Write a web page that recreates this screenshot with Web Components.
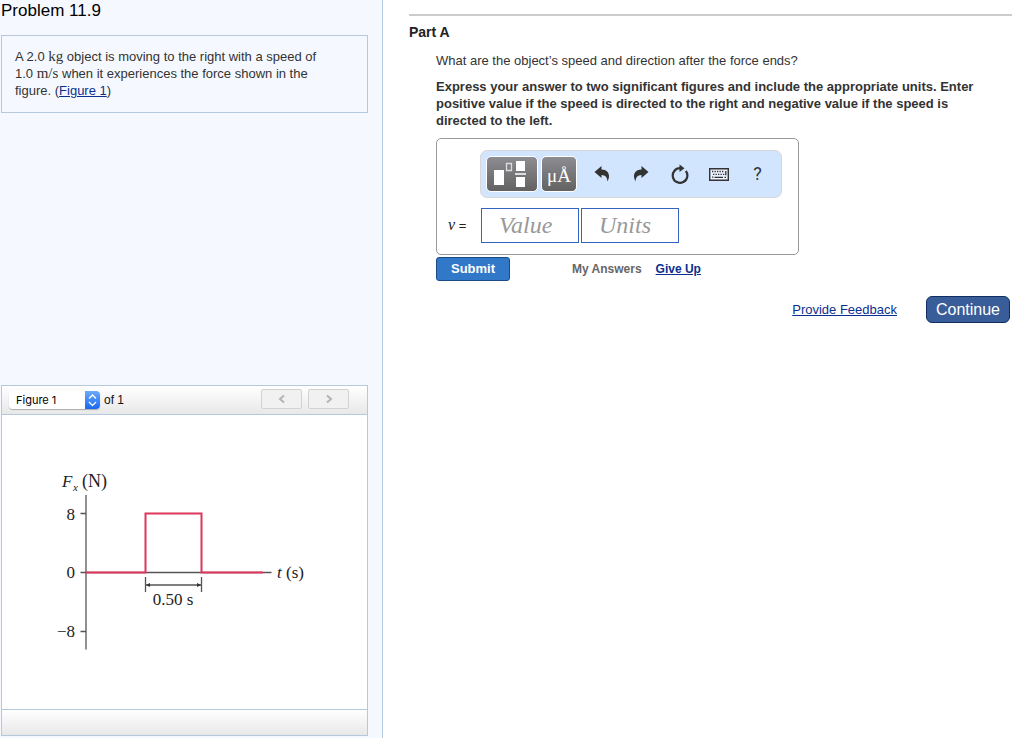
<!DOCTYPE html>
<html lang="en">
<head>
<meta charset="utf-8">
<meta name="viewport" content="width=device-width, initial-scale=1">
<title>Problem 11.9</title>
<style>
  body {
    margin: 0;
    background: #fff;
    color: #333;
    font: 13px/17px "Liberation Sans", Arial, sans-serif;
  }
  a { color: #0a2f8f; }
  .math { font: 15px/15px "Liberation Serif", serif; }
</style>
</head>
<body>
<problem-page>
  <problem-statement slot="side" name="Problem 11.9">
    A 2.0 <span class="math">kg</span> object is moving to the right with a speed of
    1.0 <span class="math">m/s</span> when it experiences the force shown in the
    figure. (<a href="#figure">Figure 1</a>)
  </problem-statement>
  <figure-viewer slot="side" id="figure" count="1">
    <force-graph></force-graph>
  </figure-viewer>

  <problem-part name="Part A">
    What are the object’s speed and direction after the force ends?
    <span slot="instructions">Express your answer to two significant figures and include the appropriate units. Enter positive value if the speed is directed to the right and negative value if the speed is directed to the left.</span>
    <answer-box slot="answer" variable="v"></answer-box>
  </problem-part>
  <page-footer></page-footer>
</problem-page>

<script>
class ProblemPage extends HTMLElement {
  constructor() {
    super();
    this.attachShadow({ mode: 'open' });
    this.shadowRoot.innerHTML = `
      <style>
        :host {
          display: grid;
          grid-template-columns: minmax(300px, 383px) 1fr;
          min-height: 100vh;
        }
        aside {
          box-sizing: border-box;
          display: flex;
          flex-direction: column;
          justify-content: space-between;
          gap: 20px;
          padding: 0 14px 2px 1px;
          background: #f5f9ff;
          border-right: 1px solid #b5c8dc;
        }
        main { padding: 14px 12px 14px 26px; }
      </style>
      <aside><slot name="side"></slot></aside>
      <main><slot></slot></main>
    `;
  }
}
customElements.define('problem-page', ProblemPage);

class ProblemStatement extends HTMLElement {
  constructor() {
    super();
    this.attachShadow({ mode: 'open' });
    this.shadowRoot.innerHTML = `
      <style>
        :host { display: block; }
        h1 {
          margin: 0 0 14px;
          color: #000;
          font-size: 17px;
          font-weight: normal;
          line-height: 21px;
        }
        #statement {
          padding: 12px 30px 13px 13px;
          border: 1px solid #b5c8dc;
        }
      </style>
      <h1></h1>
      <div id="statement"><slot></slot></div>
    `;
  }

  connectedCallback() {
    this.shadowRoot.querySelector('h1').textContent = this.getAttribute('name');
  }
}
customElements.define('problem-statement', ProblemStatement);

class FigureViewer extends HTMLElement {
  constructor() {
    super();
    this.attachShadow({ mode: 'open' });
    this.shadowRoot.innerHTML = `
      <style>
        :host {
          display: block;
          background: #fff;
          border: 1px solid #b5c8dc;
        }
        header, footer {
          box-sizing: border-box;
          background: linear-gradient(#fff, #e8e8e8);
        }
        header {
          display: flex;
          align-items: center;
          height: 29px;
          padding: 0 18px 0 7px;
          border-bottom: 1px solid #b5c8dc;
        }
        footer {
          height: 26px;
          border-top: 1px solid #b5c8dc;
        }
        label {
          display: flex;
          align-items: center;
          gap: 4px;
          margin-right: auto;
          color: #111;
          font-size: 12px;
        }
        .picker {
          display: flex;
          height: 18px;
          border-radius: 4px;
          overflow: hidden;
          box-shadow: 0 1px 1px #aaa;
        }
        /* the blue stepper is part of the select's own background */
        select {
          appearance: none;
          width: 91px;
          margin: 0;
          padding: 0 20px 0 7px;
          border: 0;
          color: #000;
          font: 11px/18px Inter, "Liberation Sans", sans-serif;
          background:
            url("data:image/svg+xml,<svg viewBox='0 0 15 18' fill='none' stroke='white' stroke-width='1.3' xmlns='http://www.w3.org/2000/svg'><path d='M4 7.5L7.5 4L11 7.5M4 11L7.5 14.5L11 11'/></svg>") right / 15px 18px no-repeat,
            linear-gradient(#6cabf8, #1768f2) right / 15px 18px no-repeat,
            #fff;
        }
        nav { display: flex; gap: 6px; }
        button {
          display: grid;
          place-items: center;
          width: 41px;
          height: 20px;
          margin: 0 0 3px;
          padding: 0;
          background: #f1f1f1;
          border: 1px solid #d2d2d2;
          border-radius: 2px;
        }
        svg {
          width: 8px;
          height: 10px;
          fill: none;
          stroke: #b4b4b4;
          stroke-width: 2;
        }
      </style>
      <header>
        <label>
          <span class="picker"><select aria-label="Figure"></select></span>
          <span id="total"></span>
        </label>
        <nav>
          <button id="previous" aria-label="Previous figure" disabled><svg viewBox="0 0 8 10"><path d="M6 1.500L2 5L6 8.500"/></svg></button>
          <button id="next" aria-label="Next figure" disabled><svg viewBox="0 0 8 10"><path d="M2 1.500L6 5L2 8.500"/></svg></button>
        </nav>
      </header>
      <slot></slot>
      <footer></footer>
    `;
  }

  connectedCallback() {
    const count = Number(this.getAttribute('count'));
    const select = this.shadowRoot.querySelector('select');
    for (let i = 1; i <= count; i++) {
      select.add(new Option('Figure ' + i));
    }
    this.shadowRoot.querySelector('#total').textContent = 'of ' + count;
  }
}
customElements.define('figure-viewer', FigureViewer);

class ForceGraph extends HTMLElement {
  constructor() {
    super();
    this.attachShadow({ mode: 'open' });
    this.shadowRoot.innerHTML = `
      <style>
        :host { display: block; padding: 50px 38px 49px; }
        svg { display: block; width: 280px; height: 195px; overflow: visible; }
        text { fill: #222; font: 17px "Liberation Serif", serif; }
        .italic { font-style: italic; }
        .axis { fill: none; stroke: #555; stroke-width: 1.3; }
        .force { fill: none; stroke: #e0355c; stroke-width: 2; }
      </style>
      <svg viewBox="0 0 280 195" role="img" aria-label="Force against time">
        <path class="axis" stroke-width="2" d="M46 30V184.500"/>
        <path class="axis" d="M40.500 48.500H46M40.500 107.500H231.500M40.500 166.500H46"/>
        <path class="force" d="M46 107.500H105.500V48.500H161.500V107.500H223"/>
        <path class="axis" d="M105.500 112V127M161.500 112V127M106 120H161"/>
        <path fill="#333" d="M106 120l4-2v4zM161 120l-4-2v4z"/>
        <text class="italic" x="22" y="22">F</text>
        <text class="italic" x="33" y="26" style="font-size: 11px">x</text>
        <text x="42" y="22" style="font-size: 18px">(N)</text>
        <text x="35" y="55" text-anchor="end">8</text>
        <text x="35" y="113" text-anchor="end">0</text>
        <text x="35" y="172" text-anchor="end">−8</text>
        <text x="237" y="113"><tspan class="italic">t</tspan> (s)</text>
        <text x="133" y="140" text-anchor="middle">0.50 s</text>
      </svg>
    `;
  }
}
customElements.define('force-graph', ForceGraph);

class ProblemPart extends HTMLElement {
  constructor() {
    super();
    this.attachShadow({ mode: 'open' });
    this.shadowRoot.innerHTML = `
      <style>
        :host {
          display: block;
          padding-top: 8px;
          border-top: 2px solid #ccc;
        }
        h2 {
          margin: 0 0 12px;
          color: #222;
          font-size: 14px;
          line-height: 16px;
        }
        #body { padding-left: 27px; }
        p { margin: 0 0 9px; }
        .instructions { padding-right: 20px; font-weight: bold; }
        .actions { display: flex; align-items: center; margin-top: 2px; }
        button {
          width: 74px;
          height: 24px;
          padding: 0;
          color: #fff;
          background: #3278c8;
          border: 1px solid #1c4c85;
          border-radius: 3px;
          font: bold 13px/16px "Liberation Sans", Arial, sans-serif;
        }
        .actions span, a { font-size: 12px; font-weight: bold; }
        .actions span { margin: 0 14px 0 62px; color: #666; }
        a { color: #0a2f8f; }
      </style>
      <h2></h2>
      <div id="body">
        <p><slot></slot></p>
        <p class="instructions"><slot name="instructions"></slot></p>
        <slot name="answer"></slot>
        <div class="actions">
          <button type="button">Submit</button>
          <span>My Answers</span>
          <a href="#give-up">Give Up</a>
        </div>
      </div>
    `;
  }

  connectedCallback() {
    this.shadowRoot.querySelector('h2').textContent = this.getAttribute('name');
  }
}
customElements.define('problem-part', ProblemPart);

class MathToolbar extends HTMLElement {
  constructor() {
    super();
    this.attachShadow({ mode: 'open' });
    this.shadowRoot.innerHTML = `
      <style>
        :host {
          box-sizing: border-box;
          display: flex;
          align-items: center;
          height: 48px;
          padding: 0 4px 0 5px;
          background: #d2e5ff;
          border: 1px solid #d8d8d8;
          border-radius: 7px;
        }
        button {
          display: grid;
          place-items: center;
          width: 39px;
          height: 36px;
          padding: 0;
          color: #333;
          background: none;
          border: 0;
          font: 18px/24px Roboto, "Liberation Sans", sans-serif;
        }
        .dark {
          width: 52px;
          margin-right: 3px;
          color: #fff;
          background: linear-gradient(#8d8d92, #626262);
          border: 1px solid #fff;
          border-radius: 5px;
        }
        #symbols {
          width: 36px;
          margin-right: 5px;
          padding-top: 3px;
          font: 19px/24px "Liberation Serif", serif;
        }
        svg { display: block; }
      </style>
      <button class="dark" aria-label="Templates">
        <svg width="40" height="28" viewBox="0 0 40 28" fill="#fff">
          <path d="M2 10h10v15H2zM24 1h9v10h-9zM24 17h9v10h-9z"/>
          <path d="M23 13h11v2h-11z" fill="#ddd"/>
          <path d="M14.500 3.500h5v7h-5z" fill="none" stroke="#ddd" stroke-width="1.300"/>
        </svg>
      </button>
      <button class="dark" id="symbols">μÅ</button>
      <button aria-label="Undo">
        <svg width="16" height="18" viewBox="0 0 16 18" fill="#333"><path d="M.5 7L7.500 1v3.500C12.500 4.500 15.500 8 15 12c-.2 1.600-.7 3-1.600 4.500C13.300 12.200 11.500 10.300 7.500 10v3z"/></svg>
      </button>
      <button aria-label="Redo">
        <svg width="16" height="18" viewBox="0 0 16 18" fill="#333"><path d="M15.500 7L8.500 1v3.500C3.500 4.500.500 8 1 12c.2 1.600.7 3 1.600 4.500C2.700 12.200 4.500 10.300 8.500 10v3z"/></svg>
      </button>
      <button aria-label="Reset">
        <svg width="18" height="20" viewBox="0 0 18 20"><path d="M14.800 7A7.300 7.300 0 1 1 9 4.200" fill="none" stroke="#333" stroke-width="2.200"/><path d="M8.500 .5l5 3.700l-5 3.700z" fill="#333"/></svg>
      </button>
      <button aria-label="Keyboard">
        <svg width="20" height="14" viewBox="0 0 20 14"><path d="M.7 1.700h18.600v11.600H.7z" fill="#eaf2ff" stroke="#333" stroke-width="1.400"/><path d="M3 4.500h12.500M4 7.300h11.500M3 10.200h1.500" fill="none" stroke="#333" stroke-width="1.300" stroke-dasharray="1.300 1.200"/><path d="M5.500 10.300h8.500M15.500 10.300h1.500M16.800 4v4.200" fill="none" stroke="#333" stroke-width="1.300"/></svg>
      </button>
      <button aria-label="Help">?</button>
    `;
  }
}
customElements.define('math-toolbar', MathToolbar);

class AnswerBox extends HTMLElement {
  constructor() {
    super();
    this.attachShadow({ mode: 'open' });
    this.shadowRoot.innerHTML = `
      <style>
        :host {
          box-sizing: border-box;
          display: grid;
          grid-template-columns: 32px auto;
          align-items: center;
          row-gap: 10px;
          width: fit-content;
          padding: 11px 16px 11px 11px;
          border: 1px solid #999;
          border-radius: 5px;
        }
        math-toolbar { grid-column: 2; }
        label { color: #222; font-size: 13px; }
        i { font: italic 16px/16px "Liberation Serif", serif; }
        .fields { display: flex; gap: 2px; padding-left: 1px; }
        input {
          box-sizing: border-box;
          width: 98px;
          height: 35px;
          padding: 0 6px 0 17px;
          color: #222;
          background: #fff;
          border: 1px solid #3563c0;
          border-radius: 0;
          font: italic 24px/30px "Liberation Serif", serif;
        }
        input::placeholder { color: #999; opacity: 1; }
      </style>
      <math-toolbar></math-toolbar>
      <label for="value"><i></i> =</label>
      <div class="fields">
        <input id="value" type="text" placeholder="Value">
        <input id="units" type="text" placeholder="Units" aria-label="Units">
      </div>
    `;
  }

  connectedCallback() {
    this.shadowRoot.querySelector('i').textContent = this.getAttribute('variable');
  }
}
customElements.define('answer-box', AnswerBox);

class PageFooter extends HTMLElement {
  constructor() {
    super();
    this.attachShadow({ mode: 'open' });
    this.shadowRoot.innerHTML = `
      <style>
        :host {
          display: flex;
          align-items: center;
          justify-content: flex-end;
          gap: 29px;
          padding: 15px 2px 0 0;
        }
        a { color: #0a2f8f; }
        button {
          width: 84px;
          height: 27px;
          padding: 0;
          color: #fff;
          background: #385d98;
          border: 1px solid #0f2f60;
          border-radius: 6px;
          font: 16px/20px "Liberation Sans", Arial, sans-serif;
        }
      </style>
      <a href="#feedback">Provide Feedback</a>
      <button type="button">Continue</button>
    `;
  }
}
customElements.define('page-footer', PageFooter);
</script>
</body>
</html>
